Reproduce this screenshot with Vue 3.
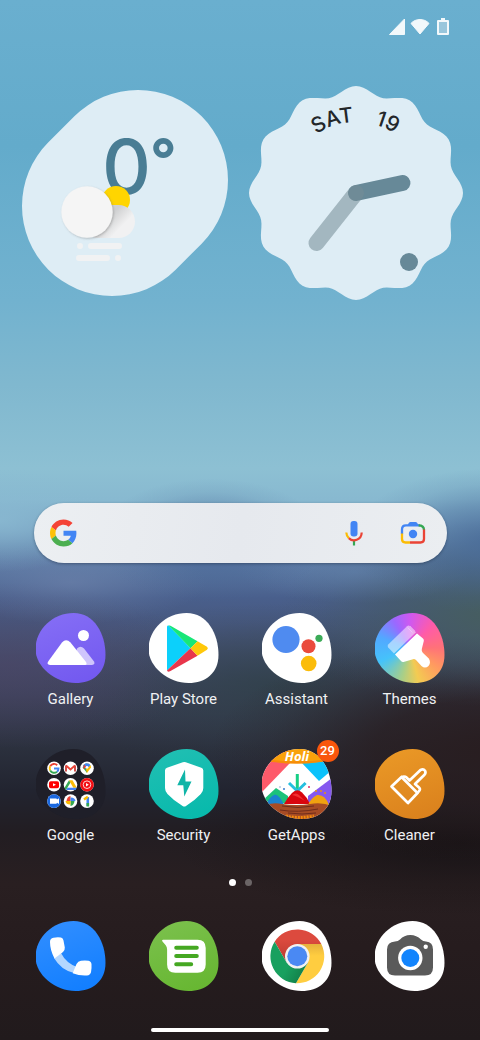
<template>
  <div class="home">
    <header class="status-bar">
      <svg width="16" height="17" viewBox="0 0 16 17" role="img" aria-label="Signal">
        <path d="M15.500 1v15.500H.5z" fill="#f2f8fb" stroke="#f2f8fb" stroke-linejoin="round" />
      </svg>
      <svg width="20" height="17" viewBox="0 0 20 17" role="img" aria-label="Wi-Fi">
        <path d="M10 16 1 5.400C5.500.2 14.500.2 19 5.400z" fill="#f2f8fb" stroke="#f2f8fb" stroke-linejoin="round" />
      </svg>
      <svg class="battery" width="12" height="17" viewBox="0 0 12 17" role="img" aria-label="Battery">
        <path d="M4 0h4v2h3q1 0 1 1v13q0 1-1 1H1q-1 0-1-1V3q0-1 1-1h3z" fill="#f2f8fb" />
        <path d="M2 4h8v11H2z" fill="#98c6dc" />
      </svg>
    </header>

    <section class="widgets">
      <svg class="weather" viewBox="0 0 206 206">
        <defs>
          <linearGradient id="cloud-shade" x1="0" y1="0.2" x2="1" y2="0.8">
            <stop offset="0.450" stop-color="#cfd0d1" />
            <stop offset="0.750" stop-color="#f1f1f2" />
          </linearGradient>
          <filter id="cloud-drop" x="-20%" y="-20%" width="150%" height="150%">
            <feDropShadow dx="1" dy="1" stdDeviation="1.200" flood-color="#6b6b6b" flood-opacity="0.4" />
          </filter>
        </defs>
        <path d="M90 116 116 90" stroke="#deedf5" stroke-width="180" stroke-linecap="round" />
        <text x="80" y="104" class="temp">0</text>
        <text x="128" y="90" class="degree">°</text>
        <circle cx="94" cy="110" r="14" fill="#ffd500" />
        <rect x="60" y="115" width="53" height="33" rx="16.500" fill="url(#cloud-shade)" />
        <circle cx="65" cy="122" r="25.700" fill="#f5f5f5" filter="url(#cloud-drop)" />
        <g fill="#f1f2f3">
          <circle cx="58" cy="156" r="3" />
          <rect x="66" y="153" width="34" height="6" rx="3" />
          <rect x="54" y="165" width="34" height="6" rx="3" />
          <circle cx="96" cy="168" r="3" />
        </g>
      </svg>

      <svg class="clock" viewBox="0 0 214 214">
        <defs>
          <path id="date-arc" d="M36 107a71 71 0 0 1 142 0" />
        </defs>
        <path :d="dialPath" fill="#deedf5" />
        <text class="date">
          <textPath href="#date-arc" startOffset="40%" text-anchor="middle">SAT</textPath>
        </text>
        <text class="date">
          <textPath href="#date-arc" startOffset="63.500%" text-anchor="middle">19</textPath>
        </text>
        <path d="M107 107 153.500 97" stroke="#678998" stroke-width="16" stroke-linecap="round" />
        <path d="M107 107 67.500 157" stroke="#758d96" stroke-opacity="0.56" stroke-width="16" stroke-linecap="round" />
        <circle cx="160" cy="176" r="9" fill="#678998" />
      </svg>
    </section>

    <form class="search" @submit.prevent>
      <svg width="27" height="28" viewBox="0 0 48 48" aria-hidden="true">
        <path fill="#f44336" d="M24 9.500c3.540 0 6.710 1.220 9.210 3.600l6.850-6.850C35.900 2.380 30.470 0 24 0 14.620 0 6.510 5.380 2.560 13.220l7.980 6.190C12.430 13.720 17.740 9.500 24 9.500z" />
        <path fill="#4285f4" d="M46.980 24.550c0-1.570-.15-3.090-.38-4.550H24v9.020h12.940c-.58 2.960-2.260 5.480-4.780 7.180l7.730 6c4.510-4.180 7.090-10.360 7.090-17.650z" />
        <path fill="#ffc107" d="M10.530 28.590c-.48-1.450-.76-2.990-.76-4.590s.27-3.140.76-4.590l-7.980-6.190C.92 16.460 0 20.120 0 24c0 3.880.92 7.540 2.560 10.780l7.970-6.190z" />
        <path fill="#4caf50" d="M24 48c6.480 0 11.930-2.130 15.890-5.810l-7.730-6c-2.150 1.450-4.920 2.300-8.160 2.300-6.260 0-11.570-4.220-13.470-9.910l-7.980 6.190C6.510 42.620 14.620 48 24 48z" />
      </svg>
      <input v-model="query" type="text" aria-label="Search" />
      <button type="button" aria-label="Voice search">
        <svg width="18" height="26" viewBox="0 0 18 26">
          <rect x="5.500" y="1" width="7" height="15.500" rx="3" fill="#4285f4" />
          <g fill="none" stroke-width="2.200">
            <path d="M9 20.500v5" stroke="#34a853" />
            <path d="M1.300 12.500Q1.500 16 3.800 18.100" stroke="#fbbc04" />
            <path d="M3.800 18.100C8 22.200 16.500 20.300 16.700 12.500" stroke="#ea4335" />
          </g>
        </svg>
      </button>
      <button type="button" aria-label="Lens">
        <svg width="26" height="24" viewBox="0 0 26 24">
          <g fill="none" stroke-width="2.300">
            <path d="M2 13V8.500Q2 4.300 6 4.300h14" stroke="#4285f4" />
            <path d="M18.500 4.300Q24 4.300 24 9" stroke="#34a853" />
            <path d="M24 8.500V18q0 3.500-3.500 3.500H10" stroke="#ea4335" />
            <path d="M2 12.500V18q0 3.500 3.500 3.500H10" stroke="#fbbc04" />
          </g>
          <path d="M7.500 5Q8.500 1 10.500 1h5Q17.500 1 18.500 5z" fill="#4285f4" />
          <circle cx="13" cy="13" r="4.200" fill="#4285f4" />
        </svg>
      </button>
    </form>

    <main class="apps">
      <button v-for="app in apps" :key="app.id" type="button" class="app">
        <span class="icon-wrap">
          <span class="icon" :class="app.id">
            <svg v-if="app.id === 'gallery'" viewBox="0 0 70 70">
              <path d="M41 35.500q3.500-3.500 7 0l10 13q1.500 3-2 3.500H36z" fill="#cfc5fc" />
              <path d="M14 52q-4-.5-1.500-4L26 29.500q4-4.500 8.500 0L50 49q1.500 3-1 3z" fill="#fff" />
              <circle cx="47.500" cy="22.500" r="5.500" fill="#fff" />
            </svg>

            <svg v-else-if="app.id === 'play'" viewBox="0 0 70 70">
              <path d="M18 14v43.500L41.500 35.300 20 12.700q-2-.5-2 1.300z" fill="#0cd0fb" />
              <path d="M19.500 12.500q1-.3 2 .3l27 15.500-7 7z" fill="#18e778" />
              <path d="M18 57.500 41.500 35.300l7 7.500L21.500 58q-3 1.500-3.500-.5z" fill="#e8364b" />
              <path d="m48.500 28.300 9.500 5.500q1.800 1.500 0 3l-9.500 6-7-7.500z" fill="#ffc80a" />
            </svg>

            <svg v-else-if="app.id === 'assistant'" viewBox="0 0 70 70">
              <circle cx="24" cy="26.500" r="13.600" fill="#4f8bf0" />
              <circle cx="46.500" cy="33.300" r="7" fill="#ea4b3c" />
              <circle cx="57" cy="25.300" r="3.600" fill="#3cab58" />
              <circle cx="46.700" cy="50.500" r="7.800" fill="#fbbc0a" />
            </svg>

            <svg v-else-if="app.id === 'themes'" viewBox="0 0 70 70">
              <path d="M32 13.200q1.500-1.200 3 0l6 6L19 40.500l-5.800-6q-1.200-1.500 0-3z" fill="#fff" fill-opacity="0.500" />
              <path d="m32.500 14.500 5 5M35 13l5 5" stroke="#fff" stroke-opacity="0.300" />
              <path d="M42 20.500 48 25.500q1.200 1 .8 2.500L46.800 36q-.5 2.200 1 3.700l6 5.800q2.500 4-.3 7.500-3.500 3-7 0l-5.500-6q-1.500-1.300-3-.8l-9.500 2.800q-1.500.3-2.500-1L20 41.500z" fill="#fff" />
            </svg>

            <svg v-else-if="app.id === 'google'" viewBox="0 0 70 70">
              <g fill="#fff">
                <circle v-for="n in 9" :key="n" :cx="18 + ((n - 1) % 3) * 16.5" :cy="19.3 + Math.floor((n - 1) / 3) * 16.4" r="6.8" />
              </g>
              <g fill="none" stroke-width="1.900">
                <path d="M21.200 16.200A4.400 4.400 0 0 0 14.200 17.300" stroke="#ea4335" />
                <path d="M14.200 17.300a4.400 4.400 0 0 0 0 4.200" stroke="#fbbc04" />
                <path d="M14.200 21.500a4.400 4.400 0 0 0 6.800 1.200" stroke="#34a853" />
                <path d="M21 22.700q1.500-1.200 1.500-3.200H18" stroke="#4285f4" />
              </g>
              <path d="M30 22.500v-6" stroke="#c5221f" stroke-width="1.600" />
              <path d="M39 22.500v-6" stroke="#c5221f" stroke-width="1.600" />
              <path d="m30 16.500 4.500 4 4.500-4" fill="none" stroke="#ea4335" stroke-width="1.800" />
              <path d="M51 14.500q-4 .2-4.200 4l4.200 5.500z" fill="#34a853" />
              <path d="M51 14.500q4 .3 4 4L51 24l-1.500-5z" fill="#fbbc04" />
              <path d="M47 17.500q.7-3 4-3.200 2.500.1 3.500 2L50 20z" fill="#4285f4" />
              <path d="M48 15.500 50.500 18 47 20z" fill="#ea4335" />
              <circle cx="51" cy="18.300" r="1.400" fill="#fff" />
              <rect x="13" y="32.200" width="10" height="7" rx="1.800" fill="#f00" />
              <path d="m17 34.200 3 1.500-3 1.500z" fill="#fff" />
              <path d="m33 31.200-4.500 7.500 1.500 2.300 4.500-7.500z" fill="#34a853" />
              <path d="M33 31.200h3.500l4.300 7.500h-3.500z" fill="#fbbc04" />
              <path d="M31.500 38.700h9.300L39.500 41H30z" fill="#4285f4" />
              <circle cx="51" cy="35.700" r="6.800" fill="#f20d12" />
              <circle cx="51" cy="35.700" r="3.800" fill="none" stroke="#fff" stroke-width="0.800" />
              <path d="m50 34 2.800 1.700L50 37.400z" fill="#fff" />
              <circle cx="18" cy="52.100" r="6.800" fill="#1a68e0" />
              <path d="M14 49.500h6q1 0 1 1l2-1.300v5.800l-2-1.300q0 1-1 1h-6z" fill="#fff" />
              <path d="M34.500 47v5h-4q.5-4.500 4-5z" fill="#ea4335" />
              <path d="M39.500 52h-5v-3.500q4.500-.2 5 3.500z" fill="#4285f4" />
              <path d="M34.500 57v-5h4q-.5 4.500-4 5z" fill="#34a853" />
              <path d="M29.500 52h5v3.500q-4.500.2-5-3.500z" fill="#fbbc04" />
              <path d="M51.800 48v9" stroke="#4285f4" stroke-width="2.600" />
              <path d="m48 50.500 3.800-2.700" stroke="#fbbc04" stroke-width="2.400" />
              <path d="M51.800 54v3.500" stroke="#34a853" stroke-width="2.600" />
            </svg>

            <svg v-else-if="app.id === 'security'" viewBox="0 0 70 70">
              <path d="M33.800 13.300q1.500-.6 3 0l15.500 5.500q2 .8 2 2.700V39q0 3.500-2.500 6-6 6.500-14.800 12-1.700 1-3.400 0Q24.500 51.500 18.500 45 16 42.500 16 39V21.500q0-1.900 2-2.700z" fill="#fff" />
              <path d="M36 20.500 28.300 36.300h6L35.300 47.500 42.500 32.500h-6z" fill="#10b5a8" />
            </svg>

            <svg v-else-if="app.id === 'getapps'" viewBox="0 0 70 70">
              <path d="M0 0h28v14L0 43z" fill="#fe5a6a" />
              <path d="M38 12h32v9L57 32z" fill="#0cc2fb" />
              <path d="M70 29v26H46v-8z" fill="#8558ef" />
              <path d="M0 52 14 39l12 8v8z" fill="#1cc27a" />
              <path d="M35.300 25v17" stroke="#17cf85" stroke-width="3" />
              <path d="m27 34 8.300 8 8.300-8" stroke="#25bfdf" stroke-width="3" fill="none" />
              <path d="M4 56q3-8 9-10.500 5 1 9 10.500z" fill="#1b83cf" />
              <path d="M22 55q3-6 8-11 5-5 10-.5 5 4.500 8 11.500z" fill="#d9060e" />
              <path d="M30 46q4-3 7 0 3 3 6 6-8-5-13-6z" fill="#f32f30" />
              <path d="M46 56q3-7 9-10 8-1 12 10z" fill="#f0a210" />
              <path d="M0 57q10-4 20-2 15 2 28 0 12-2 22 2v13H0z" fill="#a74c25" />
              <path d="M20 57q16 3 32 0M18 61q18 3 38-1M26 64q14 2 28 0" stroke="#6f2d1c" fill="none" />
              <path d="M24 67q12 3 28 0" stroke="#f28a0b" stroke-width="3" stroke-dasharray="2 1" fill="none" />
              <g fill="#e9950e">
                <circle cx="59" cy="42" r="1" />
                <circle cx="63" cy="44" r="1" />
                <circle cx="54" cy="42" r="1" />
                <circle cx="47" cy="38" r="1" fill="#dd2c68" />
                <circle cx="22" cy="40" r="1" fill="#367bd0" />
                <circle cx="18" cy="38" r="1" fill="#b2cae5" />
              </g>
              <path d="M0 0h70v11Q35 18 0 11z" fill="#f9a20b" />
              <path d="M0 10.500q35 6 70 0" stroke="#f78b08" stroke-width="2" fill="none" />
              <text x="35" y="12" text-anchor="middle" class="holi">Holi</text>
            </svg>

            <svg v-else viewBox="0 0 70 70" fill="none" stroke="#fff" stroke-width="2.700" stroke-linejoin="round">
              <path d="M16.500 37.500 26.500 28 42.500 44 33 54z" />
              <path d="m26.500 28 2.500-.5q1.500 0 2.500 1l3 3L45.500 21q3-1.300 4.500.7 1.200 2-.5 4L40 35l4 3.500q1.500 1.500.5 3L42.500 44" />
            </svg>
          </span>
          <span v-if="app.badge" class="badge">{{ app.badge }}</span>
        </span>
        <span class="label">{{ app.name }}</span>
      </button>
    </main>

    <div class="pager">
      <span v-for="page in 2" :key="page" class="dot" :class="{ active: page === currentPage }"></span>
    </div>

    <nav class="dock">
      <button type="button" class="app" aria-label="Phone">
        <span class="icon phone">
          <svg viewBox="0 0 70 70">
            <path d="M18 37q7 12 20 15l3-6q-11-4-16-14z" fill="#b4d7ff" />
            <path d="M14 21q-.2-3.500 3.500-4.300 4-.8 7.500-.2 2 .4 2.500 3l1.300 7q.3 2.500-1.800 4.500L18.500 37.500Q14 29 14 21z" fill="#fff" />
            <path d="M36.700 52.200 40.500 43q1.500-3 4.500-3.300 4-.5 7.500 0 2.800.5 3 3.500.3 4-.5 8-.8 3-4 3.300-7.500.5-14.300-2.300z" fill="#fff" />
          </svg>
        </span>
      </button>
      <button type="button" class="app" aria-label="Messages">
        <span class="icon messages">
          <svg viewBox="0 0 70 70">
            <path d="M14 18.700h34.500q8.200 0 8.200 8.200v16.600q0 8.200-8.200 8.200H26.300q-8.200 0-8.200-8.200V28.500q0-2.500-1.400-4.300l-3.400-4q-.8-1.500.7-1.500z" fill="#fff" />
            <path d="M27.200 26.800h20.600M27.200 35h20.600M27.200 43.200h15" stroke="#45a822" stroke-width="4" stroke-linecap="round" />
          </svg>
        </span>
      </button>
      <button type="button" class="app" aria-label="Chrome">
        <span class="icon chrome">
          <svg viewBox="0 0 70 70">
            <defs>
              <linearGradient id="chrome-red" x1="0" y1="0" x2="0" y2="1">
                <stop offset="0.300" stop-color="#dc4a3e" />
                <stop offset="1" stop-color="#b93a30" />
              </linearGradient>
              <linearGradient id="chrome-yellow" x1="0" y1="0" x2="0" y2="1">
                <stop offset="0" stop-color="#e5b13c" />
                <stop offset="0.300" stop-color="#ffcd40" />
              </linearGradient>
              <linearGradient id="chrome-green" x1="0" y1="0" x2="1" y2="0.600">
                <stop offset="0.600" stop-color="#18a05f" />
                <stop offset="1" stop-color="#128049" />
              </linearGradient>
            </defs>
            <g transform="translate(35.300 35.300)">
              <path d="M-22.650-14.600A27 27 0 0 1 24-12.300H0L-10.650 6.150z" fill="url(#chrome-red)" />
              <path d="M24-12.300A27 27 0 0 1-1.350 26.900L10.650 6.150 0-12.300z" fill="url(#chrome-yellow)" />
              <path d="M-1.350 26.900A27 27 0 0 1-22.650-14.600L-10.650 6.150h21.300z" fill="url(#chrome-green)" />
              <circle r="12.300" fill="#f1f1f1" />
              <circle r="10" fill="#4a89f3" />
            </g>
          </svg>
        </span>
      </button>
      <button type="button" class="app" aria-label="Camera">
        <span class="icon camera">
          <svg viewBox="0 0 70 70">
            <path d="M20 20.500q3 0 5-2 4-4.500 10.300-4.500T46 18.500q2 2 5 2 7 .5 7 8v18q0 8-8 8H20q-8 0-8-8v-18q0-7.500 8-8z" fill="#5a5a5a" />
            <circle cx="35.300" cy="37" r="12.200" fill="#fff" />
            <circle cx="35.300" cy="37" r="9" fill="#1284fd" />
            <circle cx="50.700" cy="25.700" r="2.200" fill="#fff" />
          </svg>
        </span>
      </button>
    </nav>

    <div class="home-bar"></div>
  </div>
</template>

<script setup>
import { computed, ref } from 'vue'

const query = ref('')
const currentPage = ref(1)

const apps = [
  { id: 'gallery', name: 'Gallery' },
  { id: 'play', name: 'Play Store' },
  { id: 'assistant', name: 'Assistant' },
  { id: 'themes', name: 'Themes' },
  { id: 'google', name: 'Google' },
  { id: 'security', name: 'Security' },
  { id: 'getapps', name: 'GetApps', badge: 29 },
  { id: 'cleaner', name: 'Cleaner' }
]

// twelve-lobed clock face
const dialPath = computed(() => {
  const points = []
  for (let deg = 0; deg < 360; deg += 2) {
    const t = (deg * Math.PI) / 180
    const r = 102.8 + 4.2 * Math.cos(12 * t)
    points.push(`${(107 + r * Math.sin(t)).toFixed(2)} ${(107 - r * Math.cos(t)).toFixed(2)}`)
  }
  return `M${points.join('L')}z`
})
</script>

<style>
body {
  margin: 0;
  background: #211a1c;
}
</style>

<style scoped>
.home {
  display: flex;
  flex-direction: column;
  min-height: 100vh;
  overflow: hidden;
  font-family: Roboto, "Liberation Sans", sans-serif;
  color: #fff;
  background:
    radial-gradient(ellipse 22% 5% at 0% 50%, rgba(138, 186, 210, 0.8), rgba(138, 186, 210, 0.35) 50%, transparent),
    radial-gradient(ellipse 30% 7% at 103% 52%, rgba(70, 104, 150, 0.85), rgba(70, 104, 150, 0.4) 50%, rgba(70, 104, 150, 0.12) 78%, transparent),
    radial-gradient(ellipse 24% 6% at 44% 52%, rgba(70, 100, 148, 0.8), rgba(70, 100, 148, 0.35) 50%, rgba(70, 100, 148, 0.1) 78%, transparent),
    radial-gradient(ellipse 28% 4% at 15% 56%, rgba(114, 134, 175, 0.55), rgba(114, 134, 175, 0.25) 50%, transparent),
    radial-gradient(ellipse 24% 3% at 74% 55%, rgba(98, 130, 172, 0.55), rgba(98, 130, 172, 0.25) 50%, transparent),
    radial-gradient(ellipse 46% 9% at 104% 59%, rgba(70, 94, 92, 0.95), rgba(66, 88, 92, 0.5) 50%, rgba(66, 88, 92, 0.12) 80%, transparent),
    radial-gradient(ellipse 62% 11% at 106% 72%, rgba(40, 28, 30, 0.95), rgba(40, 28, 30, 0.75) 45%, rgba(40, 28, 30, 0.2) 80%, transparent),
    radial-gradient(ellipse 40% 8% at 2% 64%, rgba(76, 68, 100, 0.6), rgba(76, 68, 100, 0.25) 55%, transparent),
    radial-gradient(ellipse 50% 8% at 58% 66%, rgba(46, 64, 70, 0.75), rgba(46, 64, 70, 0.35) 50%, rgba(46, 64, 70, 0.1) 78%, transparent),
    radial-gradient(ellipse 60% 7% at 96% 81%, rgba(22, 17, 19, 0.8), rgba(22, 17, 19, 0.35) 50%, transparent),
    linear-gradient(#6aafcf 0%, #63abcb 14%, #72b2cf 29%, #80b8cf 37%, #8dc0d3 45%, #88b9d0 48%, #779fc0 51%, #5d7ca6 54%, #495f8c 57.500%, #465375 62%, #3b4159 67%, #2b303d 72%, #222430 76%, #221d22 80%, #291f21 85%, #261c1e 91%, #211a1c 100%);
}

button {
  padding: 0;
  border: 0;
  background: none;
  color: inherit;
  font-family: inherit;
  cursor: pointer;
}

svg {
  display: block;
  overflow: visible;
}

.status-bar {
  display: flex;
  justify-content: flex-end;
  gap: 5px;
  padding: 18px 31px 0;
}

.battery {
  margin-left: 2px;
}

.widgets {
  display: flex;
  align-items: center;
  gap: 21px;
  padding: 51px 17px 40px 22px;
}

.weather {
  flex: 206;
  min-width: 0;
  fill: none;
}

.clock {
  flex: 214;
  min-width: 0;
}

.temp,
.degree {
  font-family: Inter, sans-serif;
  font-size: 76px;
  font-weight: 500;
  fill: #497d94;
}

.degree {
  font-size: 58px;
  font-weight: 700;
}

.date {
  font-family: Inter, sans-serif;
  font-size: 21px;
  font-weight: 500;
  fill: #23272a;
}

.search {
  display: flex;
  align-items: center;
  height: 60px;
  margin: auto 33px 0 34px;
  padding: 0 21px 0 16px;
  box-sizing: border-box;
  border-radius: 30px;
  background: linear-gradient(100deg, #eceff2, #e6e9ee 50%, #ebeef1);
  box-shadow: 0 1px 3px rgba(20, 30, 50, 0.4);
}

.search input {
  flex: 1;
  min-width: 0;
  margin: 0 12px;
  border: 0;
  outline: none;
  background: transparent;
  color: #23272a;
  font: 16px Roboto, sans-serif;
}

.search button + button {
  margin-left: 37px;
}

.apps,
.dock {
  display: grid;
  grid-template-columns: repeat(4, 1fr);
  padding: 0 14px;
}

.apps {
  row-gap: 40px;
  margin-top: 50px;
}

.app {
  display: flex;
  flex-direction: column;
  align-items: center;
}

.icon-wrap {
  position: relative;
}

.icon {
  display: block;
  width: 70px;
  height: 70px;
  clip-path: path('M38 0C59 0 70 21 70 42C70 60 57 70 40 70C20 70 0 54 0 36C0 16 18 0 38 0Z');
  background: #fff;
}

.gallery {
  background: linear-gradient(160deg, #866ff6, #7157ef);
}

.themes {
  background: conic-gradient(from 0deg, #cf58f0, #ff5ba8 45deg, #ff7278 90deg, #ff9a60 125deg, #f3cb52 165deg, #a8cf88 195deg, #45c3fa 245deg, #52a8ff 290deg, #9b68ff 330deg, #cf58f0);
}

.google {
  background: #1f1f29;
}

.security {
  background: linear-gradient(160deg, #22bfb3, #05b9ab);
}

.cleaner {
  background: linear-gradient(160deg, #eb9a27, #d97f1c);
}

.phone {
  background: linear-gradient(160deg, #338fff, #0f7dff);
}

.messages {
  background: linear-gradient(160deg, #7cc14e, #65b62f);
}

.holi {
  font-family: "Open Sans", sans-serif;
  font-size: 13px;
  font-style: italic;
  font-weight: 700;
  fill: #fff;
}

.badge {
  position: absolute;
  top: -9px;
  right: -7px;
  width: 22px;
  height: 22px;
  border-radius: 50%;
  background: #f9560c;
  font-size: 13px;
  font-weight: 500;
  line-height: 22px;
  text-align: center;
}

.label {
  margin-top: 6px;
  font-size: 15px;
  line-height: 20px;
  color: #f0f1f3;
}

.pager {
  display: flex;
  justify-content: center;
  gap: 9px;
  margin: 34px 0 35px;
}

.dot {
  width: 7px;
  height: 7px;
  border-radius: 50%;
  background: #6b6566;
}

.dot.active {
  background: #fff;
}

.home-bar {
  width: 37%;
  height: 4px;
  margin: 37px auto 8px;
  border-radius: 2px;
  background: #fff;
}
</style>
